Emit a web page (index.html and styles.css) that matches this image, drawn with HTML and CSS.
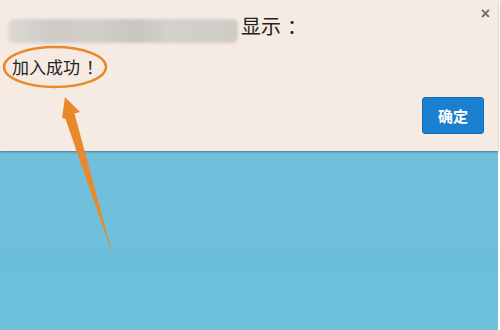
FILE: index.html
```html
<!DOCTYPE html>
<html lang="zh-CN">
<head>
  <meta charset="UTF-8">
  <meta name="viewport" content="width=device-width, initial-scale=1.0">
  <title>显示</title>

  <link rel="stylesheet" href="styles.css">
</head>
<body>
  <div id="screen">
    <div class="dialog">
      <div class="dialog-head">
        <span class="site-blur"></span>
        <span class="dialog-title">显示<span class="punct">：</span></span>
        <span class="dialog-close">×</span>
      </div>

      <p class="dialog-msg">加入成功<span class="punct punct-wide">！</span></p>

      <div class="dialog-foot">
        <button class="btn-ok">确定</button>
      </div>
    </div>

    <div class="page"></div>

    <!-- annotation drawn over the screenshot -->
    <svg class="mark" width="500" height="330" viewBox="0 0 500 330">
      <ellipse cx="55" cy="67" rx="51" ry="20" fill="none" stroke="#e88a2b" stroke-width="2.5"/>
      <path d="M65 97 L80 112 L74.5 113.5 L113 256 L65.5 119 L62 118 Z" fill="#e88a2b"/>
    </svg>
  </div>
</body>
</html>
```
FILE: styles.css
```css
*{
  margin: 0;
  padding: 0;
  box-sizing: border-box;
}

body{
  width: 500px;
  height: 330px;
  overflow: hidden;
  background: #fff;
  font-family: "Noto Sans CJK SC", "Liberation Sans", sans-serif;
}

#screen{
  width: 498px;
  height: 330px;
  position: relative;
  display: flex;
  flex-direction: column;
}

.dialog{
  height: 151px;
  background: #f6ebe2;
  display: flex;
  flex-direction: column;
  position: relative;
  z-index: 1;
  box-shadow: 0 1px 2px rgba(40,80,100,0.6);
}

.dialog-head{
  display: flex;
  align-items: flex-start;
  padding: 13px 0 0 8px;
  height: 50px;
}

.site-blur{
  display: block;
  width: 230px;
  height: 24px;
  margin-top: 6px;
  border-radius: 6px;
  background: linear-gradient(90deg, #dcd8d3 0, #cdcac6 20%, #d3cfcb 35%, #c9c6c2 55%, #d4d0cc 70%, #cfcbc7 100%);
  filter: blur(1.5px);
}

.dialog-title{
  margin-left: 3px;
  font-size: 20px;
  line-height: 26px;
  color: #222;
}

/* full-width punctuation sits centred in the reference font */
.punct{
  padding-left: 0.3em;
}

.punct-wide{
  padding-left: 0.35em;
}

.dialog-close{
  margin-left: auto;
  margin-right: 8px;
  margin-top: -8px;
  font-family: "Liberation Sans", sans-serif;
  font-size: 16px;
  font-weight: bold;
  color: #6b6b6b;
}

.dialog-msg{
  padding-left: 12px;
  margin-top: 7px;
  font-size: 17px;
  line-height: 20px;
  color: #222;
}

.dialog-foot{
  display: flex;
  justify-content: flex-end;
  padding: 20px 14px 0 0;
}

.btn-ok{
  width: 62px;
  height: 37px;
  border: 1px solid #136db4;
  border-radius: 3px;
  background: #1b80d0;
  color: #fff;
  font-size: 15px;
  font-weight: bold;
  font-family: "Noto Sans CJK SC", sans-serif;
}

.page{
  flex: 1;
  background: linear-gradient(180deg, #72c0da 0, #6cbfdc 60%, #6ec2da 100%);
}

.mark{
  position: absolute;
  left: 0;
  top: 0;
  z-index: 2;
}
```
